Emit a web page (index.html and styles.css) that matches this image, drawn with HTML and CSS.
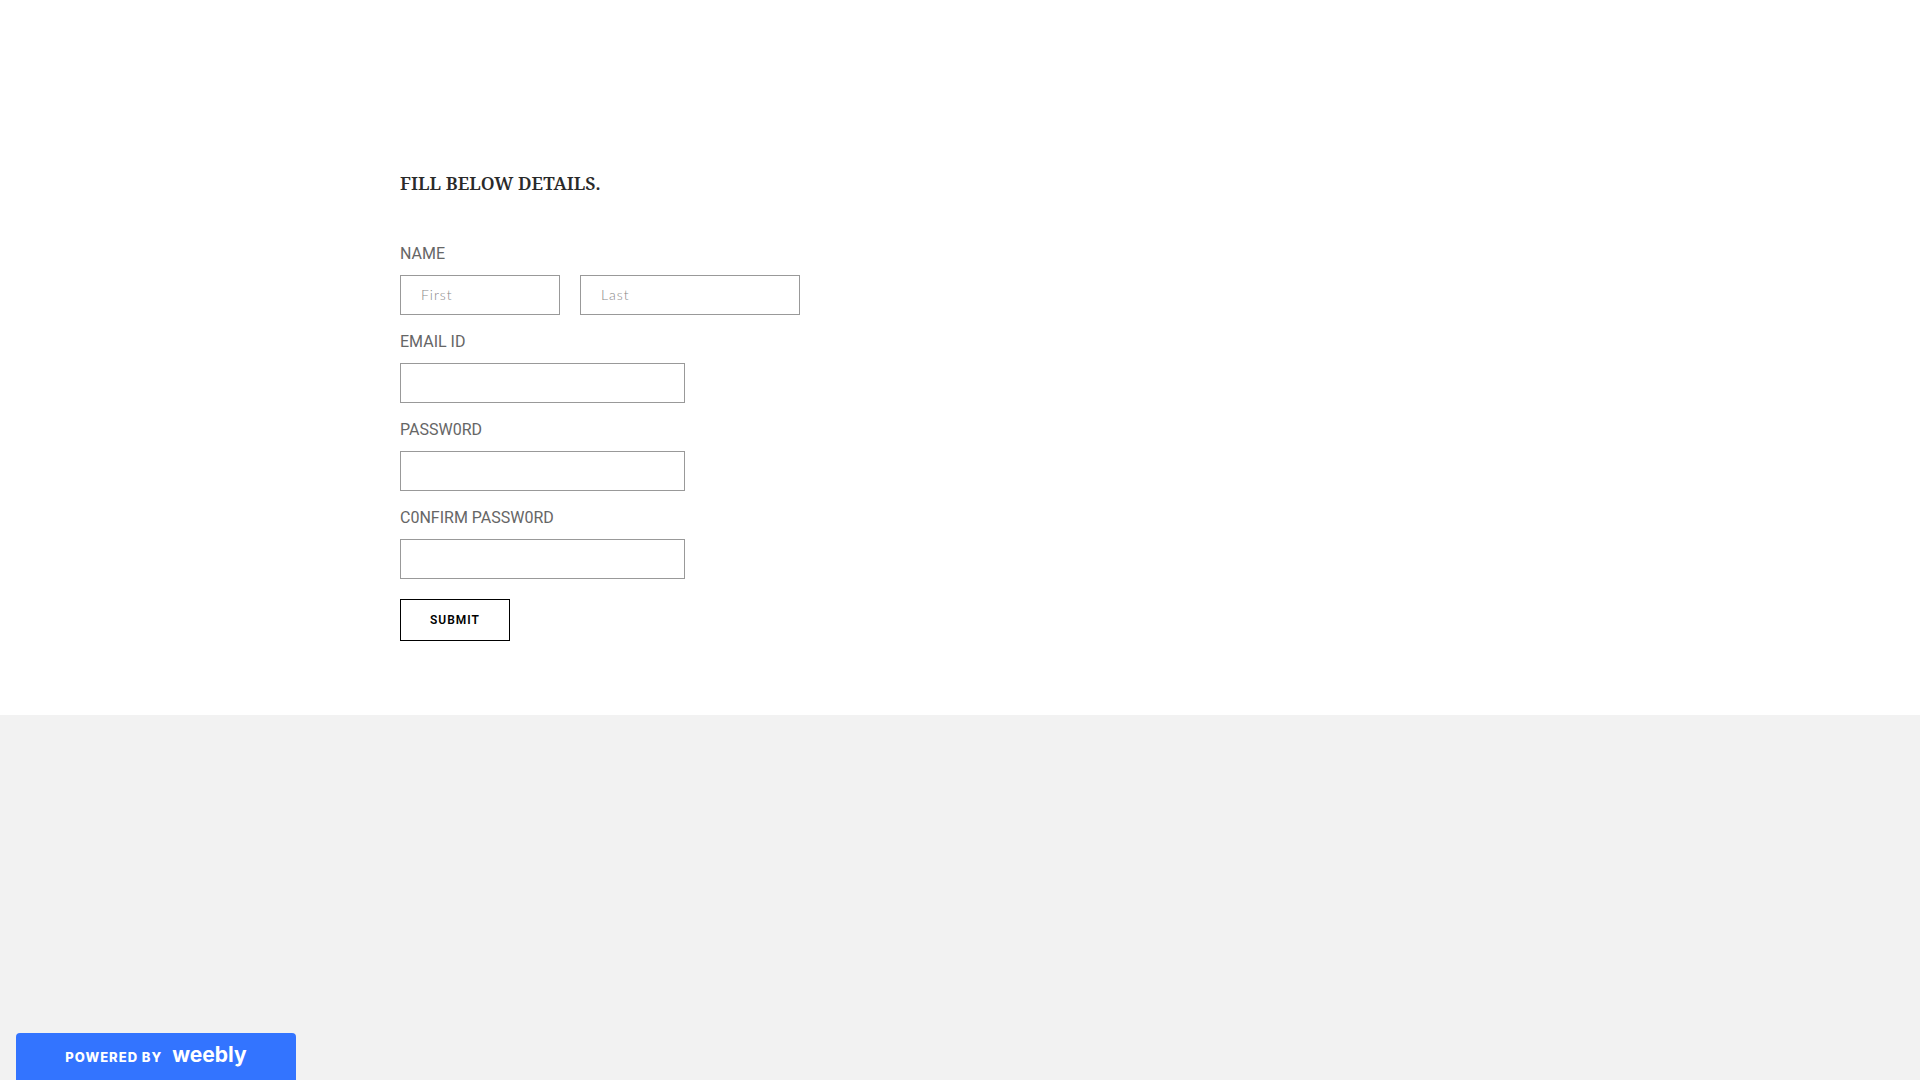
FILE: index.html
```html
<!DOCTYPE html>
<html lang="en">
<head>
  <meta charset="utf-8">
  <meta name="viewport" content="width=device-width, initial-scale=1">
  <title>Fill below details</title>
  <link rel="stylesheet" href="styles.css">
</head>
<body>
  <main class="content">
    <div class="container">
      <h2 class="form-title">FILL BELOW DETAILS.</h2>

      <form id="detailsForm">
        <label for="firstName">NAME</label>
        <div class="name-row">
          <input type="text" id="firstName" class="first-name" placeholder="First">
          <input type="text" id="lastName" class="last-name" placeholder="Last" aria-label="Last name">
        </div>

        <label for="email">EMAIL ID</label>
        <input type="text" id="email">

        <label for="password">PASSW0RD</label>
        <input type="text" id="password">

        <label for="confirmPassword">C0NFIRM PASSW0RD</label>
        <input type="text" id="confirmPassword">

        <button type="submit">SUBMIT</button>
      </form>
    </div>
  </main>

  <footer class="footer"></footer>

  <a href="#" class="powered-by">
    <span class="powered-text">POWERED BY</span>
    <span class="powered-logo">weebly</span>
  </a>
</body>
</html>
```

FILE: styles.css
```css
* {
  box-sizing: border-box;
}

body {
  display: flex;
  flex-direction: column;
  min-height: 100vh;
  margin: 0;
  background: #fff;
  color: #666;
  font-family: Roboto, Arial, sans-serif;
  font-size: 16px;
}

.content {
  padding: 167px 20px 74px;
}

.container {
  max-width: 1120px;
  margin: 0 auto;
}

.form-title {
  margin: 0 0 43px;
  color: #2a2a2a;
  font-family: "Noto Serif", "Droid Serif", "Liberation Serif", serif;
  font-size: 18px;
  font-weight: 600;
  line-height: 32px;
}

/* Form */
label {
  display: block;
  margin: 15px 0 9px;
  line-height: 24px;
}

.name-row {
  display: flex;
  gap: 20px;
}

input[type="text"] {
  display: block;
  width: 285px;
  max-width: 100%;
  height: 40px;
  padding: 0 20px 2px;
  border: 1px solid #999;
  border-radius: 0;
  background: #fff;
  color: #666;
  font-family: Lato, sans-serif;
  font-size: 14px;
  font-weight: 300;
}

input[type="text"].first-name {
  width: 160px;
}

input[type="text"].last-name {
  width: 220px;
}

input::placeholder {
  color: #888;
  letter-spacing: 1px;
}

button {
  display: block;
  margin-top: 20px;
  padding: 0 29px;
  border: 1px solid #000;
  border-radius: 0;
  background: #fff;
  color: #000;
  font-family: Roboto, Arial, sans-serif;
  font-size: 12px;
  font-weight: 600;
  letter-spacing: 1px;
  line-height: 40px;
  cursor: pointer;
}

.footer {
  flex: 1;
  background: #f2f2f2;
}

/* Badge stuck to the bottom of the window */
.powered-by {
  position: fixed;
  bottom: 0;
  left: 16px;
  display: flex;
  align-items: center;
  justify-content: center;
  gap: 10px;
  width: 280px;
  height: 47px;
  border-radius: 4px 4px 0 0;
  background: #3374ff;
  color: #fff;
  text-decoration: none;
}

.powered-text {
  font-family: Inter, sans-serif;
  font-size: 13px;
  font-weight: 800;
  letter-spacing: 1px;
}

.powered-logo {
  padding-bottom: 4px;
  font-family: Inter, sans-serif;
  font-size: 21px;
  font-weight: 700;
}
```
